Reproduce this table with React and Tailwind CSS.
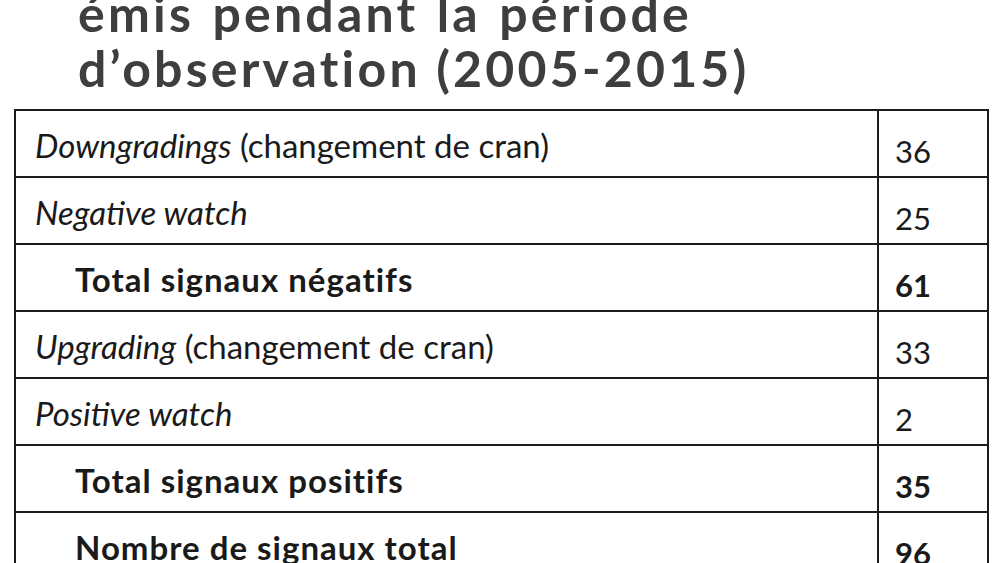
const rows = [
  { label: <><i>Downgradings</i> (changement de cran)</>, value: '36' },
  { label: <i>Negative watch</i>, value: '25' },
  { label: 'Total signaux négatifs', value: '61', bold: true },
  { label: <><i>Upgrading</i> (changement de cran)</>, value: '33' },
  { label: <i>Positive watch</i>, value: '2' },
  { label: 'Total signaux positifs', value: '35', bold: true },
  { label: 'Nombre de signaux total', value: '96', bold: true },
];

export default function App() {
  return (
    <div className="h-[563px] w-[1000px] overflow-hidden bg-white font-['Lato',sans-serif]">
      <h1 className="-mt-[14px] pl-[78px] text-[50px] font-bold leading-[55px] tracking-[3.2px] text-[#3e3e3e]">
        <span className="[word-spacing:3px]">émis pendant la période</span>
        <br />
        d’observation (2005-2015)
      </h1>

      <div className="mt-[13px] ml-[14px] w-[975px] border-x-2 border-t-2 border-[#1c1c1c]">
        {rows.map((r, i) => (
          <div key={i} className="flex h-[67px] border-b-2 border-[#1c1c1c] text-[33px] text-[#1a1a1a]">
            <div
              className={
                r.bold
                  ? 'flex flex-1 items-center border-r-2 border-[#1c1c1c] pt-1 pl-[59px] font-bold tracking-[1px]'
                  : 'flex flex-1 items-center border-r-2 border-[#1c1c1c] pt-1 pl-[19px]'
              }
            >
              <span>{r.label}</span>
            </div>
            <div
              className={
                r.bold
                  ? 'flex w-[108px] items-center pt-4 pl-[16px] text-[31px] font-bold'
                  : 'flex w-[108px] items-center pt-4 pl-[16px] text-[31px]'
              }
            >
              {r.value}
            </div>
          </div>
        ))}
      </div>
    </div>
  );
}
